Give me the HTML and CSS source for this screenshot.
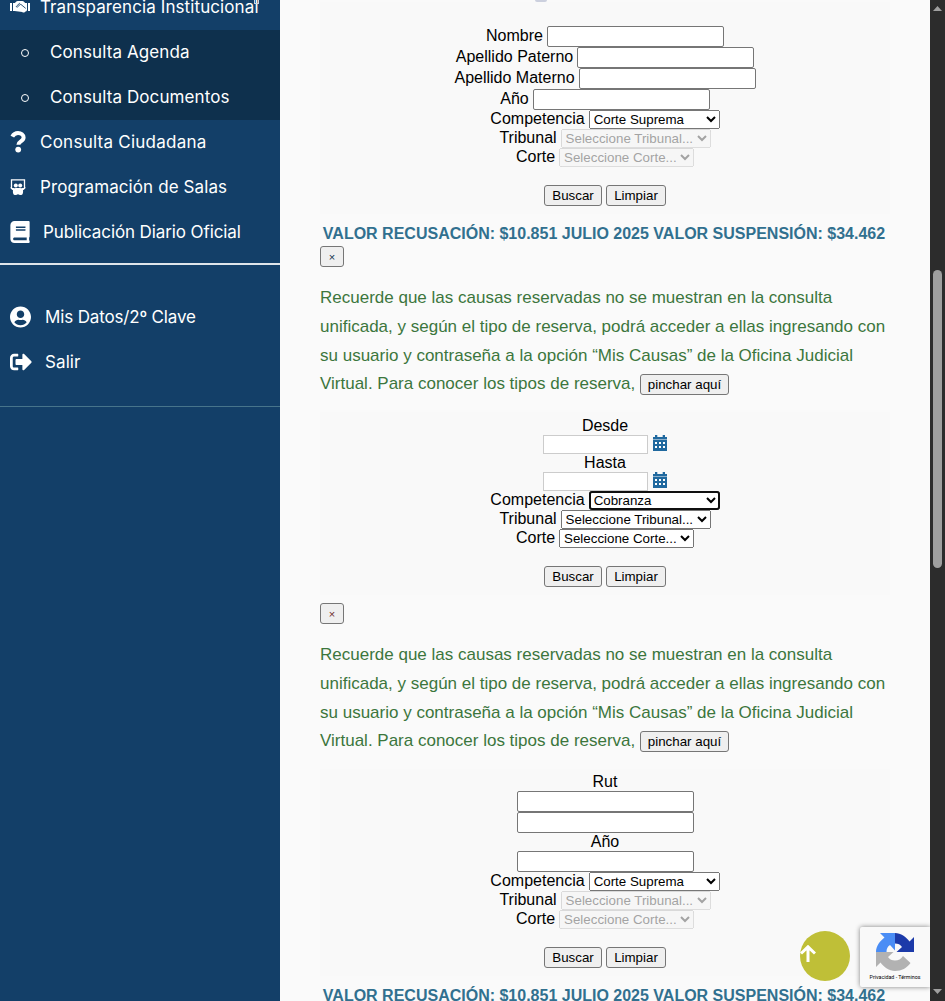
FILE: index.html
```html
<!DOCTYPE html>
<html lang="es">
<head>
<meta charset="utf-8">
<title>Consulta Unificada</title>
<link rel="stylesheet" href="styles.css">
</head>
<body>
<div class="page">
  <nav class="sidebar">
    <div class="item first"><svg class="ico" width="20" height="16" viewBox="0 0 640 512"><path fill="#fff" d="M0 128h64v256H0zM576 128h64v256h-64zM96 128h60l45-45c12-12 28-19 45-19h150c17 0 33 7 45 19l45 45h58v225c-4 10-9 20-16 28-10 12-22 18-36 20l-14 12c-24 23-63 23-88 1L147 384H96z"/><path d="m315 130-105 97c-18 17 8 47 27 30l90-82h25l150 125" fill="none" stroke="#133f68" stroke-width="28"/></svg><span class="t1">Transparencia Institucional</span><b class="mark"></b></div>
    <div class="submenu">
      <div class="item sub"><i class="dot"></i><span class="t2">Consulta Agenda</span></div>
      <div class="item sub"><i class="dot"></i><span class="t3">Consulta Documentos</span></div>
    </div>
    <div class="item"><svg class="ico" width="17" height="22" viewBox="0 0 17 22"><path d="M2.300 5.600C3.800 2.800 5.500 2 8 2c3.200 0 5.600 1.800 5.600 4.500 0 4-5.200 3.700-5.200 7.200" fill="none" stroke="#fff" stroke-width="4"/><circle cx="8.200" cy="18.600" r="2.900" fill="#fff"/></svg><span class="t4">Consulta Ciudadana</span></div>
    <div class="item"><svg class="ico" width="16" height="16" viewBox="0 0 16 16"><path d="M1.500 9V.800h13V9" fill="none" stroke="#fff" stroke-width="1.300"/><circle cx="5.800" cy="6.500" r="2" fill="#fff"/><circle cx="10.200" cy="6.500" r="2" fill="#fff"/><path fill="#fff" d="M0 8.300c2 1 4 1 7.500.800h1c3.500.2 5.500.2 7.500-.8-.7 1.600-1.800 2.300-3 2.900.4 2.500-.2 4.800-2 4.800-1.300 0-2.500-.3-3-1-.5.700-1.700 1-3 1-1.800 0-2.400-2.300-2-4.800C1.800 10.600.7 9.900 0 8.300z"/></svg><span class="t5">Programación de Salas</span></div>
    <div class="item"><svg class="ico" width="20" height="22" viewBox="0 0 448 512"><path fill="#fff" d="M448 360V24c0-13-11-24-24-24H96C43 0 0 43 0 96v320c0 53 43 96 96 96h328c13 0 24-11 24-24v-16c0-8-3-14-9-19-4-15-4-59 0-74 6-4 9-11 9-19zM128 134c0-3 3-6 6-6h212c3 0 6 3 6 6v20c0 3-3 6-6 6H134c-3 0-6-3-6-6zm0 64c0-3 3-6 6-6h212c3 0 6 3 6 6v20c0 3-3 6-6 6H134c-3 0-6-3-6-6zm253 250H96c-18 0-32-14-32-32s14-32 32-32h285c-2 17-2 47 0 64z"/></svg><span class="t6">Publicación Diario Oficial</span></div>
    <div class="account">
      <div class="item"><svg class="ico" width="21" height="22" viewBox="0 0 496 512"><path fill="#fff" d="M248 8C111 8 0 119 0 256s111 248 248 248 248-111 248-248S385 8 248 8zm0 96c49 0 88 39 88 88s-39 88-88 88-88-39-88-88 39-88 88-88zm0 344c-59 0-111-27-146-69 19-35 56-59 98-59 4 0 20 8 48 8s45-8 48-8c43 0 79 24 98 59-35 42-87 69-146 69z"/></svg><span class="t7">Mis Datos/2º Clave</span></div>
      <div class="item"><svg class="ico" width="22" height="22" viewBox="0 0 512 512"><path fill="#fff" d="m497 273-168 168c-15 15-41 4-41-17v-96H152c-13 0-24-11-24-24v-96c0-13 11-24 24-24h136V88c0-21 26-32 41-17l168 168c9 9 9 25 0 34zM192 436v-40c0-7-5-12-12-12H96c-18 0-32-14-32-32V160c0-18 14-32 32-32h84c7 0 12-5 12-12V76c0-7-5-12-12-12H96c-53 0-96 43-96 96v192c0 53 43 96 96 96h84c7 0 12-5 12-12z"/></svg><span class="t8">Salir</span></div>
    </div>
  </nav>

  <main class="content">
    <div class="peek"></div>
    <form class="form">
      <div class="row"><label>Nombre</label><input class="text" type="text"></div>
      <div class="row"><label>Apellido Paterno</label><input class="text" type="text"></div>
      <div class="row"><label>Apellido Materno</label><input class="text" type="text"></div>
      <div class="row"><label>Año</label><input class="text" type="text"></div>
      <div class="row s"><label>Competencia</label><select class="w131"><option>Corte Suprema</option></select></div>
      <div class="row s"><label>Tribunal</label><select class="w150" disabled><option>Seleccione Tribunal...</option></select></div>
      <div class="row s"><label>Corte</label><select class="w135" disabled><option>Seleccione Corte...</option></select></div>
      <div class="actions"><button type="button" class="search">Buscar</button><button type="button" class="clear">Limpiar</button></div>
    </form>
    <div class="rates">VALOR RECUSACIÓN: $10.851 JULIO 2025 VALOR SUSPENSIÓN: $34.462</div>
    <button class="close blue">×</button>
    <p class="notice">Recuerde que las causas reservadas no se muestran en la consulta<br>unificada, y según el tipo de reserva, podrá acceder a ellas ingresando con<br>su usuario y contraseña a la opción “Mis Causas” de la Oficina Judicial<br>Virtual. Para conocer los tipos de reserva, <button class="more">pinchar aquí</button></p>

    <form class="form dates">
      <div class="row d"><label>Desde</label></div>
      <div class="row date"><input class="day" type="text"><svg class="cal" width="14" height="16" viewBox="0 0 14 16"><path fill="#20699f" d="M0 2h2V0h2.300v2h5.400V0H12v2h2v2.500H0zM0 5h14v11H0z"/><path fill="#fff" d="M2 7h2v2H2zm4 0h2v2H6zm4 0h2v2h-2zM2 11h2v2H2zm4 0h2v2H6zm4 0h2v2h-2z"/></svg></div>
      <div class="row d"><label>Hasta</label></div>
      <div class="row date"><input class="day" type="text"><svg class="cal" width="14" height="16" viewBox="0 0 14 16"><path fill="#20699f" d="M0 2h2V0h2.300v2h5.400V0H12v2h2v2.500H0zM0 5h14v11H0z"/><path fill="#fff" d="M2 7h2v2H2zm4 0h2v2H6zm4 0h2v2h-2zM2 11h2v2H2zm4 0h2v2H6zm4 0h2v2h-2z"/></svg></div>
      <div class="row s"><label>Competencia</label><select class="w131 active"><option>Cobranza</option></select></div>
      <div class="row s"><label>Tribunal</label><select class="w150"><option>Seleccione Tribunal...</option></select></div>
      <div class="row s"><label>Corte</label><select class="w135"><option>Seleccione Corte...</option></select></div>
      <div class="actions"><button type="button" class="search">Buscar</button><button type="button" class="clear">Limpiar</button></div>
    </form>
    <button class="close red">×</button>
    <p class="notice">Recuerde que las causas reservadas no se muestran en la consulta<br>unificada, y según el tipo de reserva, podrá acceder a ellas ingresando con<br>su usuario y contraseña a la opción “Mis Causas” de la Oficina Judicial<br>Virtual. Para conocer los tipos de reserva, <button class="more">pinchar aquí</button></p>

    <form class="form rut">
      <div class="row d"><label>Rut</label></div>
      <div class="row"><input class="text" type="text"></div>
      <div class="row"><input class="text" type="text"></div>
      <div class="row d"><label>Año</label></div>
      <div class="row"><input class="text" type="text"></div>
      <div class="row s"><label>Competencia</label><select class="w131"><option>Corte Suprema</option></select></div>
      <div class="row s"><label>Tribunal</label><select class="w150" disabled><option>Seleccione Tribunal...</option></select></div>
      <div class="row s"><label>Corte</label><select class="w135" disabled><option>Seleccione Corte...</option></select></div>
      <div class="actions"><button type="button" class="search">Buscar</button><button type="button" class="clear">Limpiar</button></div>
    </form>
    <div class="rates">VALOR RECUSACIÓN: $10.851 JULIO 2025 VALOR SUSPENSIÓN: $34.462</div>
  </main>

  <div class="scrollbar"><svg width="9" height="5" viewBox="0 0 9 5"><path fill="#a0a0a0" d="M4.500 0 9 5H0z"/></svg><div class="thumb"></div><svg width="9" height="5" viewBox="0 0 9 5"><path fill="#a0a0a0" d="M0 0h9L4.500 5z"/></svg></div>

  <a class="to-top"><svg width="16" height="17" viewBox="0 0 16 17"><path d="M8 17V2M1 8.500 8 1.800l7 6.700" fill="none" stroke="#fff" stroke-width="3"/></svg></a>
  <div class="captcha">
    <svg width="38" height="38" viewBox="0 0 38 38"><path fill="#1c3aa9" d="M38 19V4l-4.500 4.500C30 4 25 0 19 0v10.500c3 0 5.500 1 7 3.500L20.500 19z"/><path fill="#4a8df5" d="M19 0H4l4.500 4.500C4 8 0 13 0 19h10.500c0-3 1-5.500 3.500-7l5 5.500z"/><path fill="#b2b2b2" d="M0 19v15l4.500-4.500C8 34 13 38 19 38c6.500 0 12-3 15.500-8l-7.500-7c-2 3-4.500 4.500-8 4.500-3 0-5.500-1-7-3.500l5.500-5z"/></svg>
    <span>Privacidad - Términos</span>
  </div>
</div>
</body>
</html>
```
FILE: styles.css
```css
* { box-sizing: border-box; }
body { margin: 0; overflow: hidden; background: #fafafa; font: 16px "Liberation Sans", Arial, sans-serif; color: #000; }
.page { display: flex; position: relative; width: 945px; height: 1001px; overflow: hidden; }

.sidebar { width: 280px; background: #133f68; color: #fff; font: 400 17px Inter, "Open Sans", sans-serif; }
.item { display: flex; align-items: center; height: 45px; padding-left: 10px; padding-bottom: 2px; white-space: nowrap; position: relative; }
.first { height: 30px; padding-bottom: 16px; }
.first .ico { margin-right: 10px; }
.mark { position: absolute; left: 254px; top: 0; width: 5px; height: 4px; border: 1px solid #cbd5df; border-top: 0; }
.ico { flex: none; }
.submenu { background: #0e304d; }
.sub { padding-left: 21px; }
.dot { width: 8px; height: 8px; border: 1.5px solid #fff; border-radius: 50%; margin: 2px 21px 0 0; }
.t1, .t2, .t3, .t5, .t8 { letter-spacing: .1px; }
.t4 { letter-spacing: .25px; margin-left: 13px; }
.t5 { margin-left: 14px; }
.t6 { margin-left: 13px; letter-spacing: -.1px; }
.t7 { margin-left: 14px; letter-spacing: -.15px; }
.t8 { margin-left: 13px; }
.account { margin-top: 8px; padding: 30px 0 21px; border-top: 2px solid #dfe5ea; border-bottom: 1px solid #47748b; }

.content { width: 650px; padding: 0 40px; display: flex; flex-direction: column; align-items: stretch; }
.content > * { flex: none; }
.peek { width: 12px; height: 2px; background: #ccd0de; border-radius: 0 0 6px 6px; margin-left: 215px; }
.form { padding-top: 24px; height: 212px; background: #f9f9f9; }
.row { display: flex; justify-content: center; align-items: center; height: 21px; gap: 4px; }
.row label { line-height: 19px; margin-top: -2px; }
.row.s { height: 19px; }
.row.d { height: 18px; }
.row.date { height: 19px; gap: 5px; }
.text { width: 177px; height: 21px; margin: 0; border: 1px solid #767676; border-radius: 2px; background: #fff; }
.day { width: 105px; height: 19px; margin: 0; border: 1px solid #ccc; background: #fff; }
.date { padding-left: 19px; padding-right: 19px; }
.cal { flex: none; margin-top: -3px; }
select { height: 19px; margin: 0; font: 13.333px "Liberation Sans", Arial, sans-serif; }
.w131 { width: 131px; }
.w150 { width: 150px; }
.w135 { width: 135px; }
.active { outline: 2px solid #101010; outline-offset: -2px; border-radius: 3px; background: #fff; }
.actions { display: flex; justify-content: center; gap: 4px; padding-top: 18px; }
button { font: 13.333px "Liberation Sans", Arial, sans-serif; height: 21px; padding: 0; margin: 0; border: 1px solid #767676; border-radius: 3px; background: #efefef; color: #000; }
.search { width: 58px; }
.clear { width: 60px; }
.rates { height: 32px; padding-top: 11px; margin-left: -2px; text-align: center; color: #31708f; font-weight: 700; line-height: 18px; white-space: nowrap; }
.close { width: 24px; font-size: 11px; }
.close.blue { color: #12304d; }
.close.red { color: #702c2c; }
.notice { height: 114px; margin: 17px 0 0; color: #3c763d; font-size: 17px; line-height: 28.8px; white-space: nowrap; }
.more { width: 89px; }
.dates { margin-top: 14px; height: 183px; padding-top: 5px; }
.dates + .close { margin-top: 8px; }
.rut { margin-top: 14px; height: 207px; padding-top: 4px; }

.scrollbar { width: 15px; background: #2c2c2c; display: flex; flex-direction: column; align-items: center; padding: 6px 0 7px; }
.thumb { width: 9px; height: 298px; border-radius: 5px; background: #9f9f9f; margin: 259px 0 auto; }
.to-top { position: absolute; left: 800px; top: 931px; width: 50px; height: 50px; border-radius: 50%; background: #bfbf37; display: flex; padding-top: 14px; }
.captcha { position: absolute; left: 860px; top: 927px; width: 70px; height: 60px; background: #f9f9f9; box-shadow: 0 0 5px #808080; clip-path: inset(-6px 0 -6px -6px); display: flex; flex-direction: column; align-items: center; padding-top: 6px; border-radius: 2px 0 0 2px; }
.captcha span { font: 5.300px/12px Roboto, sans-serif; white-space: nowrap; color: #000; }
```
